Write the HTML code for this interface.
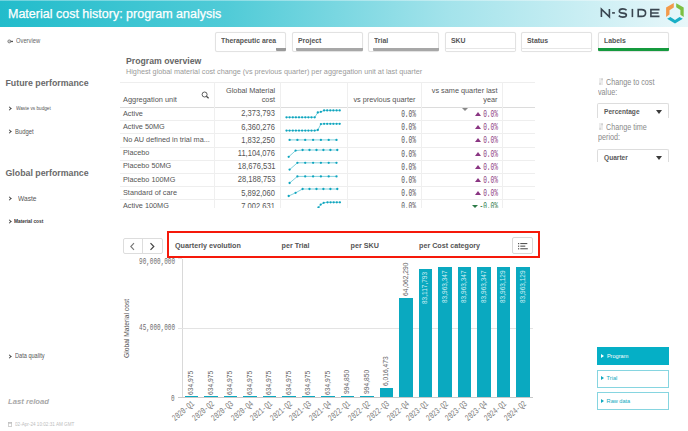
<!DOCTYPE html>
<html><head><meta charset="utf-8">
<style>
*{margin:0;padding:0;box-sizing:border-box}
html,body{width:688px;height:431px;overflow:hidden;background:#fff;font-family:"Liberation Sans",sans-serif;position:relative}
.a{position:absolute;white-space:nowrap;line-height:1}
#hdr{left:0;top:0;width:688px;height:27px;background:linear-gradient(90deg,#22bccb 0%,#50cbd7 33%,#a3e3eb 65%,#e8f7fa 100%)}
#hdr .top{position:absolute;left:0;top:0;width:688px;height:1px;background:rgba(255,255,255,.35)}
.title{left:8px;top:8.3px;font-size:12.5px;color:#fff;-webkit-text-stroke:.25px #fff}
.logo{left:600px;top:8px;font-size:10.6px;color:#3c4850;letter-spacing:1.6px;font-weight:normal}
.fb{top:32px;width:71px;height:19.5px;border:1px solid #e2e2e2;border-radius:2px;background:#fff;box-shadow:0 0 1px rgba(0,0,0,.08)}
.fb span{position:absolute;left:5px;top:4.15px;font-size:7.25px;font-weight:bold;color:#555;transform:scaleX(.95);transform-origin:0 50%}
.fb i{position:absolute;bottom:-.5px;height:2.6px;background:#a7a7a7;border-radius:0 0 1px 1px}
.nav{font-size:6px;color:#555}
.chev{position:absolute;width:3px;height:3px;border-right:1.1px solid #444;border-bottom:1.1px solid #444;transform:rotate(-45deg)}
.sec{font-size:8.8px;font-weight:bold;color:#6a6a6a}
.hl{background:#eeeeee}
.vl{background:#efefef}
.cell{font-size:7.3px;color:#555}
.num{font-size:8.5px;color:#555;transform:scaleX(.886);transform-origin:100% 50%}
.pct{font-family:"Liberation Mono",monospace;font-size:10px;color:#555;transform:scaleX(.62);transform-origin:100% 50%}
.pu{color:#8c3b80}
.gr{color:#2d7a47}
.rp{font-size:8.2px;color:#8a8a8a;transform:scaleX(.88);transform-origin:0 50%}
.dd{width:71.5px;height:14.6px;border:1px solid #ddd;border-bottom:none;border-radius:2px 2px 0 0}
.dd span{position:absolute;left:6px;top:5.4px;font-size:6.6px;font-weight:bold;color:#5a5a5a}
.dd i{position:absolute;left:58.2px;top:6.2px;width:0;height:0;border-left:3.3px solid transparent;border-right:3.3px solid transparent;border-top:4px solid #3a3a3a}
.tab{font-size:7.2px;font-weight:bold;color:#555;top:242px}
.ylab{font-family:"Liberation Mono",monospace;font-size:9.5px;color:#6e6e6e;transform:scaleX(.63);transform-origin:100% 50%}
.bar{position:absolute;background:#0aa9c0;width:13.6px}
.vlab{position:absolute;white-space:nowrap;font-size:6.7px;line-height:1;color:#666;transform-origin:0 0;transform:rotate(-90deg)}
.xlab{position:absolute;white-space:nowrap;right:0;top:-4px;font-family:"Liberation Mono",monospace;font-size:9px;line-height:1;color:#777;transform-origin:100% 50%;transform:rotate(-40deg) scaleX(.68)}
.anc{position:absolute;width:0;height:0}
.btn{left:597.3px;width:71.4px;height:18px;border:1px solid #86d5e0}
.btn span{position:absolute;left:8.3px;top:5.6px;font-size:5.6px;color:#10a9c0}
.btn i{position:absolute;left:2.6px;top:5.6px;width:0;height:0;border-top:2.6px solid transparent;border-bottom:2.6px solid transparent;border-left:3px solid #10a9c0}
</style></head><body>

<div id="hdr" class="a"><div class="top"></div></div>
<div class="a title">Material cost history: program analysis</div>
<svg class="a" style="left:596px;top:0" width="92" height="27" viewBox="596 0 92 27">
 <g fill="none" stroke="#3a4650" stroke-width="1.6" stroke-linejoin="miter">
  <path d="M601.4,17.1 V9.1 L609.4,16.9 V8.9"/>
  <path d="M612.1,12.9 H614.9"/>
  <path d="M626.6,10.3 C625.8,9.4 624.5,8.9 622.8,8.9 C620.5,8.9 619.3,10 619.3,11.2 C619.3,12.6 620.6,12.9 622.8,13.1 C625,13.3 626.4,13.7 626.4,15 C626.4,16.2 625.2,17.1 622.8,17.1 C620.9,17.1 619.6,16.5 618.8,15.6"/>
  <path d="M632.4,8.9 V17.1"/>
  <path d="M638.2,9.6 V16.4 H641.5 C644.5,16.4 645.6,14.8 645.6,13 C645.6,11.2 644.5,9.6 641.5,9.6 Z"/>
  <path d="M659.5,9.6 H650.9 V16.4 H659.5 M650.9,13 H658.6"/>
 </g>
 <polygon points="673.8,3 666.1,7.6 666.1,16.9 669.5,14.4 669.5,10.2 673.8,7.5" fill="#f39a4a"/>
 <polygon points="676.2,3.3 683.7,7.6 683.7,16.9 680.4,14.8 680.4,10 676.2,7.3" fill="#7cc043"/>
 <polygon points="667.1,18.7 670.4,16.9 675,19.9 679.5,16.9 682.8,18.7 675,23.5" fill="#19afc6"/>
</svg>

<!-- filter boxes -->
<div class="a fb" style="left:215px"><span>Therapeutic area</span><i style="left:60px;width:10px;background:#9a9a9a"></i></div>
<div class="a fb" style="left:291.5px"><span>Project</span><i style="left:3.5px;width:66.5px"></i></div>
<div class="a fb" style="left:368px"><span>Trial</span><i style="left:3.5px;width:66.5px"></i></div>
<div class="a fb" style="left:444.5px"><span>SKU</span><i style="left:0;width:69px;height:3px;background:#fff;border-top:1px solid #e6e6e6"></i></div>
<div class="a fb" style="left:521px"><span>Status</span><i style="left:0;width:69px;height:3px;background:#fff;border-top:1px solid #e6e6e6"></i></div>
<div class="a fb" style="left:597.5px"><span>Labels</span><i style="left:-1px;width:71px;background:#159a3e"></i></div>

<!-- left nav -->
<svg class="a" style="left:6.5px;top:38.5px" width="7" height="5" viewBox="0 0 7 5"><circle cx="2.3" cy="2.4" r="1.5" fill="#ccc" stroke="#777" stroke-width=".8"/><rect x="3.6" y="1.8" width="2.4" height="1.3" fill="#555"/></svg>
<div class="a nav" style="left:15.8px;top:37.06px;font-size:7.07px;color:#666;transform:scaleX(.82);transform-origin:0 50%">Overview</div>

<div class="a sec" style="left:5.5px;top:79.2px">Future performance</div>
<div class="a chev" style="left:7.5px;top:107px"></div>
<div class="a nav" style="left:15.5px;top:106.08px;font-size:5.73px;transform:scaleX(.82);transform-origin:0 50%">Waste vs budget</div>
<div class="a chev" style="left:7.5px;top:130px"></div>
<div class="a nav" style="left:14.5px;top:128.35px;font-size:7.20px;transform:scaleX(.82);transform-origin:0 50%">Budget</div>

<div class="a sec" style="left:5.5px;top:169.2px">Global performance</div>
<div class="a chev" style="left:8px;top:197px"></div>
<div class="a nav" style="left:17.8px;top:195.28px;font-size:8.05px;transform:scaleX(.82);transform-origin:0 50%">Waste</div>
<div class="a chev" style="left:7.5px;top:220px"></div>
<div class="a nav" style="left:14px;top:219.07px;font-size:5.85px;font-weight:bold;color:#333;transform:scaleX(.82);transform-origin:0 50%">Material cost</div>

<div class="a chev" style="left:8px;top:354.5px"></div>
<div class="a nav" style="left:14.5px;top:353.19px;font-size:6.83px;color:#555;transform:scaleX(.82);transform-origin:0 50%">Data quality</div>
<div class="a" style="left:8px;top:397.8px;font-size:7.7px;font-weight:bold;font-style:italic;color:#a9a9a9">Last reload</div>
<svg class="a" style="left:7.5px;top:421.6px" width="4" height="5" viewBox="0 0 4 5"><rect x=".3" y=".6" width="3.4" height="4" fill="none" stroke="#bbb" stroke-width=".7"/><rect x=".3" y=".6" width="3.4" height="1" fill="#bbb"/></svg>
<div class="a" style="left:14.5px;top:421.69px;font-size:5.65px;color:#bdbdbd;transform:scaleX(.82);transform-origin:0 50%">02-Apr-24 10:02:31 AM GMT</div>

<!-- program overview -->
<div class="a" style="left:126px;top:56.7px;font-size:8.7px;font-weight:bold;color:#666">Program overview</div>
<div class="a" style="left:126px;top:67.5px;font-size:7.26px;color:#9a9a9a">Highest global material cost change (vs previous quarter) per aggregation unit at last quarter</div>

<div class="a hl" style="left:120px;top:82.0px;width:414.5px;height:1px"></div>
<div class="a" style="left:120px;top:106.5px;width:414.5px;height:1.2px;background:#dcdcdc"></div>
<div class="a hl" style="left:120px;top:120.2px;width:414.5px;height:1px"></div>
<div class="a hl" style="left:120px;top:133.4px;width:414.5px;height:1px"></div>
<div class="a hl" style="left:120px;top:146.6px;width:414.5px;height:1px"></div>
<div class="a hl" style="left:120px;top:159.8px;width:414.5px;height:1px"></div>
<div class="a hl" style="left:120px;top:173.0px;width:414.5px;height:1px"></div>
<div class="a hl" style="left:120px;top:186.2px;width:414.5px;height:1px"></div>
<div class="a hl" style="left:120px;top:199.4px;width:414.5px;height:1px"></div>
<div class="a vl" style="left:214.4px;top:82.0px;width:1px;height:126.0px"></div>
<div class="a vl" style="left:279.8px;top:82.0px;width:1px;height:126.0px"></div>
<div class="a vl" style="left:347.1px;top:82.0px;width:1px;height:126.0px"></div>
<div class="a vl" style="left:421.1px;top:82.0px;width:1px;height:126.0px"></div>
<div class="a vl" style="left:501.8px;top:82.0px;width:1px;height:126.0px"></div>
<div class="a cell" style="left:123px;top:96px;font-size:7.4px">Aggregation unit</div>
<svg class="a" style="left:200.5px;top:91.3px" width="9" height="8" viewBox="0 0 9 8"><circle cx="3.6" cy="3.5" r="2.5" fill="none" stroke="#555" stroke-width="0.95"/><line x1="5.4" y1="5.3" x2="7.6" y2="7.3" stroke="#444" stroke-width="1.2"/></svg>
<div class="a cell" style="right:412.9px;top:86.5px;text-align:right;">Global Material</div>
<div class="a cell" style="right:412.9px;top:95.5px;text-align:right;">cost</div>
<div class="a cell" style="right:272.5px;top:95.5px;text-align:right;">vs previous quarter</div>
<div class="a cell" style="right:190.5px;top:86.5px;text-align:right;">vs same quarter last</div>
<div class="a cell" style="right:190.5px;top:95.5px;text-align:right;">year</div>
<div class="a" style="left:462.3px;top:108.2px;width:0;height:0;border-left:3px solid transparent;border-right:3px solid transparent;border-top:3.6px solid #888"></div>
<div class="a" style="left:0;top:107.0px;width:688px;height:101.0px;overflow:hidden">
<div class="a cell" style="left:123px;top:2.6px;font-size:7.3px">Active</div>
<div class="a num" style="right:412.8px;top:2.3px">2,373,793</div>
<div class="a pct" style="right:272.2px;top:2.9px">0.0%</div>
<div class="a pct pu" style="right:190px;top:2.9px">0.0%</div>
<div class="a" style="left:474.8px;top:4.9px;width:0;height:0;border-left:3px solid transparent;border-right:3px solid transparent;border-bottom:4.2px solid #8a3582"></div>
<div class="a cell" style="left:123px;top:15.8px;font-size:7.3px">Active 50MG</div>
<div class="a num" style="right:412.8px;top:15.5px">6,360,276</div>
<div class="a pct" style="right:272.2px;top:16.1px">0.0%</div>
<div class="a pct pu" style="right:190px;top:16.1px">0.0%</div>
<div class="a" style="left:474.8px;top:18.1px;width:0;height:0;border-left:3px solid transparent;border-right:3px solid transparent;border-bottom:4.2px solid #8a3582"></div>
<div class="a cell" style="left:123px;top:29.0px;font-size:7.3px">No AU defined in trial ma...</div>
<div class="a num" style="right:412.8px;top:28.7px">1,832,250</div>
<div class="a pct" style="right:272.2px;top:29.3px">0.0%</div>
<div class="a pct pu" style="right:190px;top:29.3px">0.0%</div>
<div class="a" style="left:474.8px;top:31.3px;width:0;height:0;border-left:3px solid transparent;border-right:3px solid transparent;border-bottom:4.2px solid #8a3582"></div>
<div class="a cell" style="left:123px;top:42.2px;font-size:7.3px">Placebo</div>
<div class="a num" style="right:412.8px;top:41.9px">11,104,076</div>
<div class="a pct" style="right:272.2px;top:42.5px">0.0%</div>
<div class="a pct pu" style="right:190px;top:42.5px">0.0%</div>
<div class="a" style="left:474.8px;top:44.5px;width:0;height:0;border-left:3px solid transparent;border-right:3px solid transparent;border-bottom:4.2px solid #8a3582"></div>
<div class="a cell" style="left:123px;top:55.4px;font-size:7.3px">Placebo 50MG</div>
<div class="a num" style="right:412.8px;top:55.1px">18,676,531</div>
<div class="a pct" style="right:272.2px;top:55.7px">0.0%</div>
<div class="a pct pu" style="right:190px;top:55.7px">0.0%</div>
<div class="a" style="left:474.8px;top:57.7px;width:0;height:0;border-left:3px solid transparent;border-right:3px solid transparent;border-bottom:4.2px solid #8a3582"></div>
<div class="a cell" style="left:123px;top:68.6px;font-size:7.3px">Placebo 100MG</div>
<div class="a num" style="right:412.8px;top:68.3px">28,188,753</div>
<div class="a pct" style="right:272.2px;top:68.9px">0.0%</div>
<div class="a pct pu" style="right:190px;top:68.9px">0.0%</div>
<div class="a" style="left:474.8px;top:70.9px;width:0;height:0;border-left:3px solid transparent;border-right:3px solid transparent;border-bottom:4.2px solid #8a3582"></div>
<div class="a cell" style="left:123px;top:81.8px;font-size:7.3px">Standard of care</div>
<div class="a num" style="right:412.8px;top:81.5px">5,892,060</div>
<div class="a pct" style="right:272.2px;top:82.1px">0.0%</div>
<div class="a pct pu" style="right:190px;top:82.1px">0.0%</div>
<div class="a" style="left:474.8px;top:84.1px;width:0;height:0;border-left:3px solid transparent;border-right:3px solid transparent;border-bottom:4.2px solid #8a3582"></div>
<div class="a cell" style="left:123px;top:95.0px;font-size:7.3px">Active 100MG</div>
<div class="a num" style="right:412.8px;top:94.7px">7,002,631</div>
<div class="a pct" style="right:272.2px;top:95.3px">0.0%</div>
<div class="a pct gr" style="right:190px;top:95.3px">-0.0%</div>
<div class="a" style="left:471.5px;top:98.0px;width:0;height:0;border-left:3px solid transparent;border-right:3px solid transparent;border-top:3.8px solid #2d7a47"></div>
<svg class="a" style="left:0;top:-107.0px" width="688" height="431"><path d="M286.5,117.3 L289.6,117.3 L292.8,117.3 L295.9,117.3 L299.0,117.3 L302.1,117.3 L305.3,117.3 L308.4,117.3 L311.5,117.3 L314.7,117.3 L317.8,112.5 L320.9,111.8 L324.1,110.4 L327.2,110.4 L330.3,110.4 L333.4,110.4 L336.6,110.4 L339.7,110.4" fill="none" stroke="#3db8cb" stroke-width="0.65"/><circle cx="286.5" cy="117.3" r="1.15" fill="#0fa5be"/><circle cx="289.6" cy="117.3" r="1.15" fill="#0fa5be"/><circle cx="292.8" cy="117.3" r="1.15" fill="#0fa5be"/><circle cx="295.9" cy="117.3" r="1.15" fill="#0fa5be"/><circle cx="299.0" cy="117.3" r="1.15" fill="#0fa5be"/><circle cx="302.1" cy="117.3" r="1.15" fill="#0fa5be"/><circle cx="305.3" cy="117.3" r="1.15" fill="#0fa5be"/><circle cx="308.4" cy="117.3" r="1.15" fill="#0fa5be"/><circle cx="311.5" cy="117.3" r="1.15" fill="#0fa5be"/><circle cx="314.7" cy="117.3" r="1.15" fill="#0fa5be"/><circle cx="317.8" cy="112.5" r="1.15" fill="#0fa5be"/><circle cx="320.9" cy="111.8" r="1.15" fill="#0fa5be"/><circle cx="324.1" cy="110.4" r="1.15" fill="#0fa5be"/><circle cx="327.2" cy="110.4" r="1.15" fill="#0fa5be"/><circle cx="330.3" cy="110.4" r="1.15" fill="#0fa5be"/><circle cx="333.4" cy="110.4" r="1.15" fill="#0fa5be"/><circle cx="336.6" cy="110.4" r="1.15" fill="#0fa5be"/><circle cx="339.7" cy="110.4" r="1.15" fill="#0fa5be"/><path d="M286.5,130.6 L289.6,130.6 L292.8,130.6 L295.9,130.6 L299.0,130.6 L302.1,130.6 L305.3,130.6 L308.4,130.6 L311.5,130.6 L314.7,130.6 L317.8,130.0 L320.9,124.1 L324.1,123.8 L327.2,123.8 L330.3,123.8 L333.4,123.8 L336.6,123.8 L339.7,123.8" fill="none" stroke="#3db8cb" stroke-width="0.65"/><circle cx="286.5" cy="130.6" r="1.15" fill="#0fa5be"/><circle cx="289.6" cy="130.6" r="1.15" fill="#0fa5be"/><circle cx="292.8" cy="130.6" r="1.15" fill="#0fa5be"/><circle cx="295.9" cy="130.6" r="1.15" fill="#0fa5be"/><circle cx="299.0" cy="130.6" r="1.15" fill="#0fa5be"/><circle cx="302.1" cy="130.6" r="1.15" fill="#0fa5be"/><circle cx="305.3" cy="130.6" r="1.15" fill="#0fa5be"/><circle cx="308.4" cy="130.6" r="1.15" fill="#0fa5be"/><circle cx="311.5" cy="130.6" r="1.15" fill="#0fa5be"/><circle cx="314.7" cy="130.6" r="1.15" fill="#0fa5be"/><circle cx="317.8" cy="130.0" r="1.15" fill="#0fa5be"/><circle cx="320.9" cy="124.1" r="1.15" fill="#0fa5be"/><circle cx="324.1" cy="123.8" r="1.15" fill="#0fa5be"/><circle cx="327.2" cy="123.8" r="1.15" fill="#0fa5be"/><circle cx="330.3" cy="123.8" r="1.15" fill="#0fa5be"/><circle cx="333.4" cy="123.8" r="1.15" fill="#0fa5be"/><circle cx="336.6" cy="123.8" r="1.15" fill="#0fa5be"/><circle cx="339.7" cy="123.8" r="1.15" fill="#0fa5be"/><path d="M289.6,139.9 L297.4,139.9 L305.2,139.9 L313.1,139.9 L320.9,139.9 L328.7,139.9 L336.5,139.9" fill="none" stroke="#3db8cb" stroke-width="0.65"/><circle cx="289.6" cy="139.9" r="1.15" fill="#0fa5be"/><circle cx="297.4" cy="139.9" r="1.15" fill="#0fa5be"/><circle cx="305.2" cy="139.9" r="1.15" fill="#0fa5be"/><circle cx="313.1" cy="139.9" r="1.15" fill="#0fa5be"/><circle cx="320.9" cy="139.9" r="1.15" fill="#0fa5be"/><circle cx="328.7" cy="139.9" r="1.15" fill="#0fa5be"/><circle cx="336.5" cy="139.9" r="1.15" fill="#0fa5be"/><path d="M288.7,156.8 L295.6,150.6 L302.6,150.0 L309.5,150.0 L316.5,150.0 L323.4,150.0 L330.4,150.0 L337.3,150.0" fill="none" stroke="#3db8cb" stroke-width="0.65"/><circle cx="288.7" cy="156.8" r="1.15" fill="#0fa5be"/><circle cx="295.6" cy="150.6" r="1.15" fill="#0fa5be"/><circle cx="302.6" cy="150.0" r="1.15" fill="#0fa5be"/><circle cx="309.5" cy="150.0" r="1.15" fill="#0fa5be"/><circle cx="316.5" cy="150.0" r="1.15" fill="#0fa5be"/><circle cx="323.4" cy="150.0" r="1.15" fill="#0fa5be"/><circle cx="330.4" cy="150.0" r="1.15" fill="#0fa5be"/><circle cx="337.3" cy="150.0" r="1.15" fill="#0fa5be"/><path d="M289.6,169.6 L297.4,162.8 L305.2,162.8 L313.1,162.8 L320.9,162.8 L328.7,162.8 L336.5,162.8" fill="none" stroke="#3db8cb" stroke-width="0.65"/><circle cx="289.6" cy="169.6" r="1.15" fill="#0fa5be"/><circle cx="297.4" cy="162.8" r="1.15" fill="#0fa5be"/><circle cx="305.2" cy="162.8" r="1.15" fill="#0fa5be"/><circle cx="313.1" cy="162.8" r="1.15" fill="#0fa5be"/><circle cx="320.9" cy="162.8" r="1.15" fill="#0fa5be"/><circle cx="328.7" cy="162.8" r="1.15" fill="#0fa5be"/><circle cx="336.5" cy="162.8" r="1.15" fill="#0fa5be"/><path d="M289.6,183.0 L297.4,176.4 L305.2,176.4 L313.1,176.4 L320.9,176.4 L328.7,176.4 L336.5,176.4" fill="none" stroke="#3db8cb" stroke-width="0.65"/><circle cx="289.6" cy="183.0" r="1.15" fill="#0fa5be"/><circle cx="297.4" cy="176.4" r="1.15" fill="#0fa5be"/><circle cx="305.2" cy="176.4" r="1.15" fill="#0fa5be"/><circle cx="313.1" cy="176.4" r="1.15" fill="#0fa5be"/><circle cx="320.9" cy="176.4" r="1.15" fill="#0fa5be"/><circle cx="328.7" cy="176.4" r="1.15" fill="#0fa5be"/><circle cx="336.5" cy="176.4" r="1.15" fill="#0fa5be"/><path d="M288.7,196.0 L295.6,192.8 L302.6,189.0 L309.5,189.0 L316.5,189.0 L323.4,189.0 L330.4,189.0 L337.3,189.0" fill="none" stroke="#3db8cb" stroke-width="0.65"/><circle cx="288.7" cy="196.0" r="1.15" fill="#0fa5be"/><circle cx="295.6" cy="192.8" r="1.15" fill="#0fa5be"/><circle cx="302.6" cy="189.0" r="1.15" fill="#0fa5be"/><circle cx="309.5" cy="189.0" r="1.15" fill="#0fa5be"/><circle cx="316.5" cy="189.0" r="1.15" fill="#0fa5be"/><circle cx="323.4" cy="189.0" r="1.15" fill="#0fa5be"/><circle cx="330.4" cy="189.0" r="1.15" fill="#0fa5be"/><circle cx="337.3" cy="189.0" r="1.15" fill="#0fa5be"/><path d="M318.5,207.5 L320.7,204.6 L323.7,202.8 L327.5,202.3 L330.6,202.3 L333.7,202.3 L336.8,202.3 L339.9,202.3" fill="none" stroke="#3db8cb" stroke-width="0.65"/><circle cx="318.5" cy="207.5" r="1.15" fill="#0fa5be"/><circle cx="320.7" cy="204.6" r="1.15" fill="#0fa5be"/><circle cx="323.7" cy="202.8" r="1.15" fill="#0fa5be"/><circle cx="327.5" cy="202.3" r="1.15" fill="#0fa5be"/><circle cx="330.6" cy="202.3" r="1.15" fill="#0fa5be"/><circle cx="333.7" cy="202.3" r="1.15" fill="#0fa5be"/><circle cx="336.8" cy="202.3" r="1.15" fill="#0fa5be"/><circle cx="339.9" cy="202.3" r="1.15" fill="#0fa5be"/></svg>
</div>

<!-- right panel -->
<svg class="a" style="left:599px;top:78.1px" width="4.2" height="7" viewBox="0 0 4.2 7"><rect x="0" y="0" width="4.2" height="7" fill="#ececec"/><rect x="2.2" y=".4" width="1.8" height="1.8" fill="#d2d2d2"/><rect x=".2" y="4.8" width="1.8" height="2" fill="#d6d6d6"/></svg>
<div class="a rp" style="left:606px;top:78.5px">Change to cost</div>
<div class="a rp" style="left:597.5px;top:89.4px">value:</div>
<div class="a dd" style="left:597px;top:103px"><span>Percentage</span><i></i></div>
<svg class="a" style="left:599px;top:123.1px" width="4.2" height="7" viewBox="0 0 4.2 7"><rect x="0" y="0" width="4.2" height="7" fill="#ececec"/><rect x="2.2" y=".4" width="1.8" height="1.8" fill="#d2d2d2"/><rect x=".2" y="4.8" width="1.8" height="2" fill="#d6d6d6"/></svg>
<div class="a rp" style="left:606px;top:123.5px">Change time</div>
<div class="a rp" style="left:597.5px;top:134.2px">period:</div>
<div class="a dd" style="left:597px;top:149px;height:13.2px"><span style="top:4.5px">Quarter</span><i></i></div>

<!-- chart header -->
<div class="a" style="left:122.5px;top:237.5px;width:40px;height:16px;border:1px solid #ddd;border-radius:2px"></div>
<div class="a" style="left:142px;top:237.5px;width:1px;height:16px;background:#ddd"></div>
<svg class="a" style="left:129px;top:241.5px" width="7" height="9" viewBox="0 0 7 9"><polyline points="5,1.2 1.8,4.5 5,7.8" fill="none" stroke="#777" stroke-width="1.1"/></svg>
<svg class="a" style="left:149px;top:241.5px" width="7" height="9" viewBox="0 0 7 9"><polyline points="1.5,1.2 4.8,4.5 1.5,7.8" fill="none" stroke="#444" stroke-width="1.2"/></svg>
<div class="a" style="left:167px;top:231.3px;width:372.6px;height:26.9px;border:2.4px solid #f5190a"></div>
<div class="a tab" style="left:175px">Quarterly evolution</div>
<div class="a tab" style="left:281.5px">per Trial</div>
<div class="a tab" style="left:350.5px">per SKU</div>
<div class="a tab" style="left:419px">per Cost category</div>
<div class="a" style="left:512px;top:237px;width:20.8px;height:16.6px;border:1px solid #d8d8d8;border-radius:2px"></div>
<svg class="a" style="left:517.5px;top:242.6px" width="10" height="7" viewBox="0 0 10 7"><rect x="0" y="0" width="1.2" height="1.2" fill="#555"/><rect x="0" y="2.6" width="1.2" height="1.2" fill="#555"/><rect x="0" y="5.2" width="1.2" height="1.2" fill="#555"/><rect x="2.3" y="0" width="7" height="1.1" fill="#555"/><rect x="2.3" y="2.6" width="5" height="1.1" fill="#555"/><rect x="2.3" y="5.2" width="7.5" height="1.1" fill="#555"/></svg>

<div class="a" style="left:181.5px;top:258.5px;width:1px;height:139px;background:#d9d9d9"></div>
<div class="a" style="left:177.5px;top:327.6px;width:355px;height:1px;background:#e3e3e3"></div>
<div class="a" style="left:177.5px;top:397.1px;width:355px;height:1px;background:#c8c8c8"></div>
<div class="a" style="left:177.5px;top:258.2px;width:4px;height:1px;background:#e3e3e3"></div>
<div class="a ylab" style="right:513px;top:257.2px">90,000,000</div>
<div class="a ylab" style="right:513px;top:323px">45,000,000</div>
<div class="a ylab" style="right:513px;top:394.3px">0</div>
<div class="a" style="left:124px;top:358px;font-size:6.7px;color:#555;transform-origin:0 0;transform:rotate(-90deg)">Global Material cost</div>
<div class="bar" style="left:184.7px;top:396.3px;height:1.0px"></div>
<div class="vlab" style="left:188.2px;top:394.5px">634,975</div>
<div class="anc" style="left:194.0px;top:403px"><div class="xlab">2020-Q1</div></div>
<div class="bar" style="left:204.2px;top:396.3px;height:1.0px"></div>
<div class="vlab" style="left:207.7px;top:394.5px">634,975</div>
<div class="anc" style="left:213.5px;top:403px"><div class="xlab">2020-Q2</div></div>
<div class="bar" style="left:223.7px;top:396.3px;height:1.0px"></div>
<div class="vlab" style="left:227.2px;top:394.5px">634,975</div>
<div class="anc" style="left:233.0px;top:403px"><div class="xlab">2020-Q3</div></div>
<div class="bar" style="left:243.2px;top:396.3px;height:1.0px"></div>
<div class="vlab" style="left:246.7px;top:394.5px">634,975</div>
<div class="anc" style="left:252.5px;top:403px"><div class="xlab">2020-Q4</div></div>
<div class="bar" style="left:262.7px;top:396.3px;height:1.0px"></div>
<div class="vlab" style="left:266.2px;top:394.5px">634,975</div>
<div class="anc" style="left:272.0px;top:403px"><div class="xlab">2021-Q1</div></div>
<div class="bar" style="left:282.2px;top:396.3px;height:1.0px"></div>
<div class="vlab" style="left:285.7px;top:394.5px">634,975</div>
<div class="anc" style="left:291.5px;top:403px"><div class="xlab">2021-Q2</div></div>
<div class="bar" style="left:301.7px;top:396.3px;height:1.0px"></div>
<div class="vlab" style="left:305.2px;top:394.5px">634,975</div>
<div class="anc" style="left:311.0px;top:403px"><div class="xlab">2021-Q3</div></div>
<div class="bar" style="left:321.2px;top:396.3px;height:1.0px"></div>
<div class="vlab" style="left:324.7px;top:394.5px">634,975</div>
<div class="anc" style="left:330.5px;top:403px"><div class="xlab">2021-Q4</div></div>
<div class="bar" style="left:340.7px;top:395.8px;height:1.5px"></div>
<div class="vlab" style="left:344.2px;top:394.0px">994,850</div>
<div class="anc" style="left:350.0px;top:403px"><div class="xlab">2022-Q1</div></div>
<div class="bar" style="left:360.2px;top:395.8px;height:1.5px"></div>
<div class="vlab" style="left:363.7px;top:394.0px">994,850</div>
<div class="anc" style="left:369.5px;top:403px"><div class="xlab">2022-Q2</div></div>
<div class="bar" style="left:379.7px;top:388.0px;height:9.3px"></div>
<div class="vlab" style="left:383.2px;top:386.2px">6,016,473</div>
<div class="anc" style="left:389.0px;top:403px"><div class="xlab">2022-Q3</div></div>
<div class="bar" style="left:399.2px;top:298.2px;height:99.1px"></div>
<div class="vlab" style="left:402.7px;top:296.4px">64,062,290</div>
<div class="anc" style="left:408.5px;top:403px"><div class="xlab">2022-Q4</div></div>
<div class="bar" style="left:418.7px;top:268.7px;height:128.6px"></div>
<div class="vlab" style="left:422.3px;top:304.1px;color:#d2eff4;font-size:6.5px">83,117,793</div>
<div class="anc" style="left:428.0px;top:403px"><div class="xlab">2023-Q1</div></div>
<div class="bar" style="left:438.2px;top:267.4px;height:129.9px"></div>
<div class="vlab" style="left:441.8px;top:302.8px;color:#d2eff4;font-size:6.5px">83,963,347</div>
<div class="anc" style="left:447.5px;top:403px"><div class="xlab">2023-Q2</div></div>
<div class="bar" style="left:457.7px;top:267.4px;height:129.9px"></div>
<div class="vlab" style="left:461.3px;top:302.8px;color:#d2eff4;font-size:6.5px">83,963,347</div>
<div class="anc" style="left:467.0px;top:403px"><div class="xlab">2023-Q3</div></div>
<div class="bar" style="left:477.2px;top:267.4px;height:129.9px"></div>
<div class="vlab" style="left:480.8px;top:302.8px;color:#d2eff4;font-size:6.5px">83,963,347</div>
<div class="anc" style="left:486.5px;top:403px"><div class="xlab">2023-Q4</div></div>
<div class="bar" style="left:496.7px;top:267.4px;height:129.9px"></div>
<div class="vlab" style="left:500.3px;top:302.8px;color:#d2eff4;font-size:6.5px">83,963,129</div>
<div class="anc" style="left:506.0px;top:403px"><div class="xlab">2024-Q1</div></div>
<div class="bar" style="left:516.2px;top:267.4px;height:129.9px"></div>
<div class="vlab" style="left:519.8px;top:302.8px;color:#d2eff4;font-size:6.5px">83,963,129</div>
<div class="anc" style="left:525.5px;top:403px"><div class="xlab">2024-Q2</div></div>

<!-- right buttons -->
<div class="a btn" style="top:347.3px;background:#05afc6;border-color:#05afc6"><i style="border-left-color:#fff"></i><span style="color:#fff;left:8.6px;top:5.8px">Program</span></div>
<div class="a btn" style="top:369.5px"><i></i><span>Trial</span></div>
<div class="a btn" style="top:392.3px"><i></i><span>Raw data</span></div>

</body></html>
